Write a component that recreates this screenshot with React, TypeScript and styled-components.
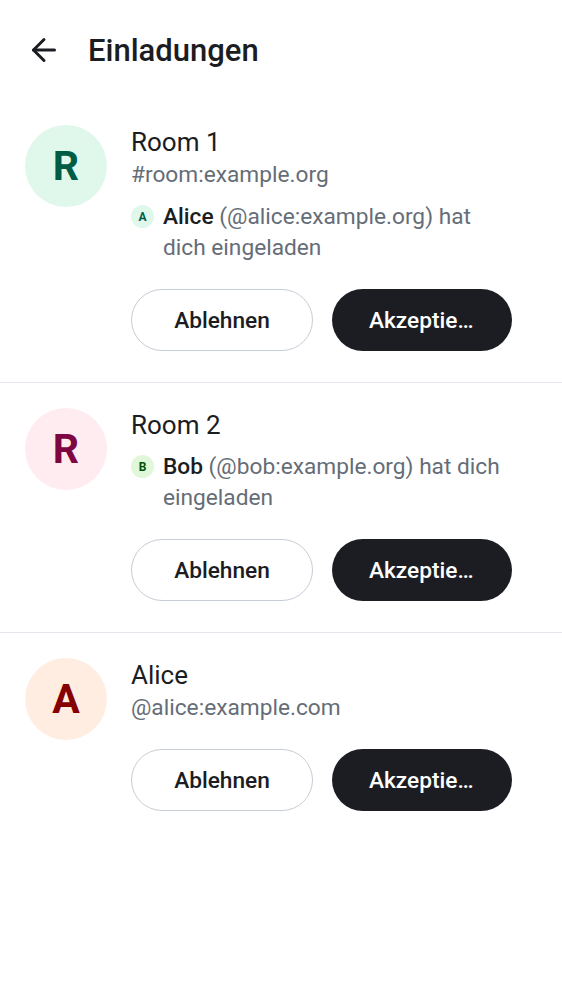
import styled, { createGlobalStyle } from 'styled-components'
import { ArrowLeft } from 'lucide-react'

type Tone = 'green' | 'pink' | 'orange' | 'lime'

const tones: Record<Tone, { bg: string; fg: string }> = {
  green: { bg: '#e0f8ec', fg: '#005c45' },
  pink: { bg: '#ffecf0', fg: '#7e0642' },
  orange: { bg: '#ffede1', fg: '#850000' },
  lime: { bg: '#e0f8d9', fg: '#005100' },
}

type Invite = {
  id: string
  name: string
  letter: string
  tone: Tone
  subtitle?: string
  inviter?: { name: string; id: string; letter: string; tone: Tone; tail: string }
}

const invites: Invite[] = [
  {
    id: 'r1',
    name: 'Room 1',
    letter: 'R',
    tone: 'green',
    subtitle: '#room:example.org',
    inviter: { name: 'Alice', id: '@alice:example.org', letter: 'A', tone: 'green', tail: 'hat dich eingeladen' },
  },
  {
    id: 'r2',
    name: 'Room 2',
    letter: 'R',
    tone: 'pink',
    inviter: { name: 'Bob', id: '@bob:example.org', letter: 'B', tone: 'lime', tail: 'hat dich eingeladen' },
  },
  {
    id: 'dm',
    name: 'Alice',
    letter: 'A',
    tone: 'orange',
    subtitle: '@alice:example.com',
  },
]

export default function App() {
  return (
    <>
      <GlobalStyle />
      <Screen>
        <TopBar>
          <BackButton type="button" aria-label="Zurück">
            <ArrowLeft size={36} strokeWidth={2} />
          </BackButton>
          <Title>Einladungen</Title>
        </TopBar>
        <List>
          {invites.map((invite) => (
            <Item key={invite.id}>
              <Avatar $tone={invite.tone}>{invite.letter}</Avatar>
              <Body>
                <Name>{invite.name}</Name>
                {invite.subtitle && <Subtitle>{invite.subtitle}</Subtitle>}
                {invite.inviter && (
                  <InviterRow>
                    <SmallAvatar $tone={invite.inviter.tone}>{invite.inviter.letter}</SmallAvatar>
                    <InviterText>
                      <strong>{invite.inviter.name}</strong> ({invite.inviter.id}) {invite.inviter.tail}
                    </InviterText>
                  </InviterRow>
                )}
                <Actions>
                  <OutlineButton type="button">Ablehnen</OutlineButton>
                  <FilledButton type="button">Akzeptieren</FilledButton>
                </Actions>
              </Body>
            </Item>
          ))}
        </List>
      </Screen>
    </>
  )
}

const GlobalStyle = createGlobalStyle`
  body {
    margin: 0;
    background: #ffffff;
    font-family: Roboto, "Noto Sans", sans-serif;
    color: #1b1d22;
  }
`

const Screen = styled.div`
  width: 562px;
  min-height: 1000px;
  background: #ffffff;
`

const TopBar = styled.header`
  display: flex;
  align-items: center;
  height: 100px;
  padding: 0 0 0 26px;
  gap: 26px;
  box-sizing: border-box;
`

const BackButton = styled.button`
  display: flex;
  align-items: center;
  justify-content: center;
  padding: 0;
  border: 0;
  background: none;
  color: #1b1d22;
  cursor: pointer;
`

const Title = styled.h1`
  margin: 0;
  font-size: 31px;
  font-weight: 500;
  color: #1b1d22;
`

const List = styled.div`
  display: flex;
  flex-direction: column;
`

const Item = styled.section`
  display: flex;
  align-items: flex-start;
  gap: 24px;
  padding: 25px 50px 31px 25px;
  border-bottom: 1px solid #e4e8ee;

  &:last-child {
    border-bottom: 0;
  }
`

const Avatar = styled.div<{ $tone: Tone }>`
  flex: none;
  display: flex;
  align-items: center;
  justify-content: center;
  width: 82px;
  height: 82px;
  border-radius: 50%;
  background: ${(p) => tones[p.$tone].bg};
  color: ${(p) => tones[p.$tone].fg};
  font-size: 41px;
  font-weight: 700;
`

const Body = styled.div`
  flex: 1;
  min-width: 0;
  display: flex;
  flex-direction: column;
  padding-top: 2px;
`

const Name = styled.div`
  font-size: 26px;
  line-height: 30px;
  color: #1b1d22;
`

const Subtitle = styled.div`
  margin-top: 3px;
  font-size: 22.7px;
  line-height: 30px;
  color: #656d77;
`

const InviterRow = styled.div`
  display: flex;
  align-items: flex-start;
  gap: 9px;
  margin-top: 11px;
`

const SmallAvatar = styled.div<{ $tone: Tone }>`
  flex: none;
  display: flex;
  align-items: center;
  justify-content: center;
  width: 23px;
  height: 23px;
  margin-top: 4px;
  border-radius: 50%;
  background: ${(p) => tones[p.$tone].bg};
  color: ${(p) => tones[p.$tone].fg};
  font-size: 12px;
  font-weight: 700;
`

const InviterText = styled.p`
  margin: 0;
  font-size: 22.7px;
  line-height: 31px;
  color: #656d77;

  strong {
    font-weight: 500;
    color: #1b1d22;
  }
`

const Actions = styled.div`
  display: flex;
  gap: 19px;
  margin-top: 26px;
`

const BaseButton = styled.button`
  flex: 1;
  min-width: 0;
  height: 62px;
  padding: 0 37px;
  border-radius: 31px;
  font-family: inherit;
  font-size: 22.7px;
  font-weight: 500;
  white-space: nowrap;
  overflow: hidden;
  text-overflow: ellipsis;
  cursor: pointer;
`

const OutlineButton = styled(BaseButton)`
  border: 1px solid #c7cdd5;
  background: #ffffff;
  color: #1b1d22;
`

const FilledButton = styled(BaseButton)`
  border: 0;
  background: #1b1d22;
  color: #ffffff;
`
